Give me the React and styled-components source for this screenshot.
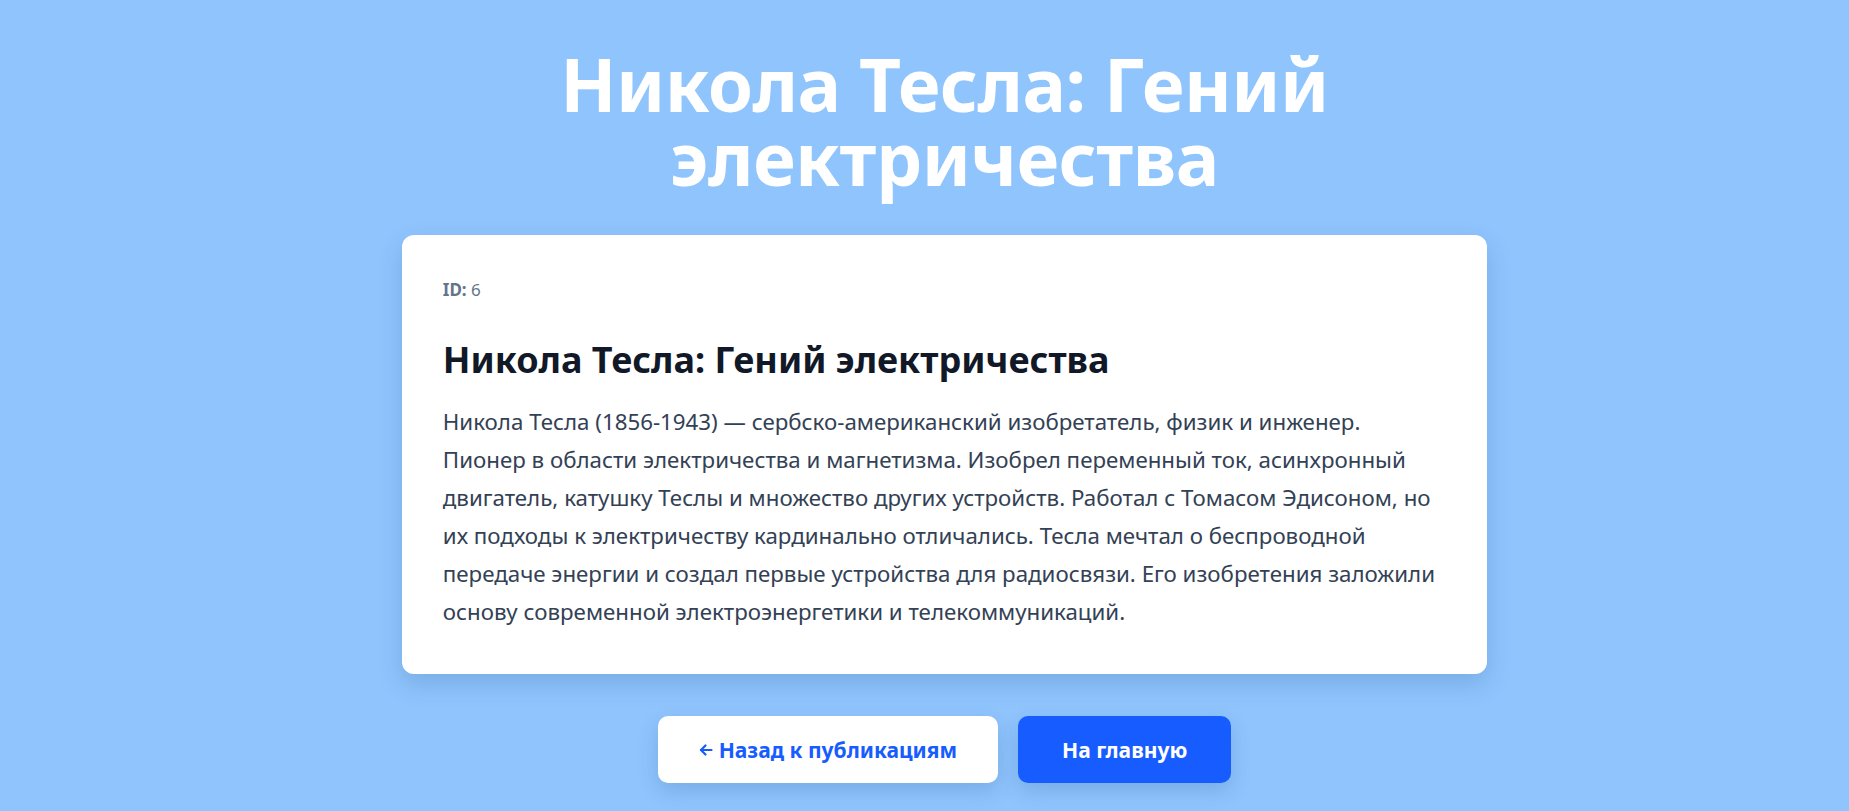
import React from "react";
import styled, { createGlobalStyle } from "styled-components";

const Global = createGlobalStyle`
  html, body { margin: 0; padding: 0; }
  body {
    background: #8fc4fd;
    font-family: "Noto Sans", "Open Sans", sans-serif;
    min-height: 100vh;
  }
`;

const Page = styled.main`
  box-sizing: border-box;
  min-height: 100vh;
  padding: 47px 0 40px 40px;
  display: flex;
  flex-direction: column;
  align-items: center;
`;

const Title = styled.h1`
  margin: 0 0 40px;
  max-width: 900px;
  text-align: center;
  color: #ffffff;
  font-size: 73px;
  line-height: 74px;
  font-weight: 700;
  letter-spacing: -0.5px;
`;

const Card = styled.article`
  box-sizing: border-box;
  width: 60%;
  background: #ffffff;
  border-radius: 12px;
  padding: 43px 41px 43px;
  box-shadow: 0 10px 25px rgba(30, 64, 120, 0.18);
`;

const Meta = styled.div`
  font-family: "Noto Sans", sans-serif;
  font-size: 17px;
  line-height: 24px;
  color: #64748b;
  margin-bottom: 35px;
`;

const MetaLabel = styled.strong`
  font-weight: 700;
`;

const CardHeading = styled.h2`
  margin: 0 0 21px;
  font-size: 36px;
  line-height: 45px;
  font-weight: 700;
  color: #111827;
`;

const Body = styled.p`
  margin: 0;
  font-size: 22.3px;
  line-height: 38px;
  color: #334155;
`;

const Actions = styled.div`
  display: flex;
  gap: 20px;
  margin-top: 42px;
`;

const Button = styled.button`
  display: inline-flex;
  align-items: center;
  font-family: "Noto Sans", sans-serif;
  font-size: 21px;
  font-weight: 700;
  height: 67px;
  padding: ${(p) => (p.$primary ? "0 44px" : "0 41px")};
  border: none;
  border-radius: 10px;
  cursor: pointer;
  background: ${(p) => (p.$primary ? "#175cff" : "#ffffff")};
  color: ${(p) => (p.$primary ? "#ffffff" : "#175cff")};
  box-shadow: 0 8px 20px rgba(30, 64, 120, 0.18);
`;

const ArrowIcon = styled.svg`
  width: 14px;
  height: 14px;
  margin-right: 6px;
  margin-top: 1px;
  flex: none;
`;

export default function App() {
  return (
    <>
      <Global />
      <Page>
        <Title>Никола Тесла: Гений электричества</Title>
        <Card>
          <Meta>
            <MetaLabel>ID:</MetaLabel> 6
          </Meta>
          <CardHeading>Никола Тесла: Гений электричества</CardHeading>
          <Body>
            Никола Тесла (1856-1943) — сербско-американский изобретатель, физик и инженер.
            <br />
            Пионер в области электричества и магнетизма. Изобрел переменный ток, асинхронный
            <br />
            двигатель, катушку Теслы и множество других устройств. Работал с Томасом Эдисоном, но
            <br />
            их подходы к электричеству кардинально отличались. Тесла мечтал о беспроводной
            <br />
            передаче энергии и создал первые устройства для радиосвязи. Его изобретения заложили
            <br />
            основу современной электроэнергетики и телекоммуникаций.
          </Body>
        </Card>
        <Actions>
          <Button>
            <ArrowIcon viewBox="0 0 14 14" fill="none" stroke="currentColor" strokeWidth="2.2" strokeLinecap="round" strokeLinejoin="round">
              <path d="M12.5 7H2" />
              <path d="M6.5 2.5L2 7l4.5 4.5" />
            </ArrowIcon>
            Назад к публикациям
          </Button>
          <Button $primary>На главную</Button>
        </Actions>
      </Page>
    </>
  );
}
